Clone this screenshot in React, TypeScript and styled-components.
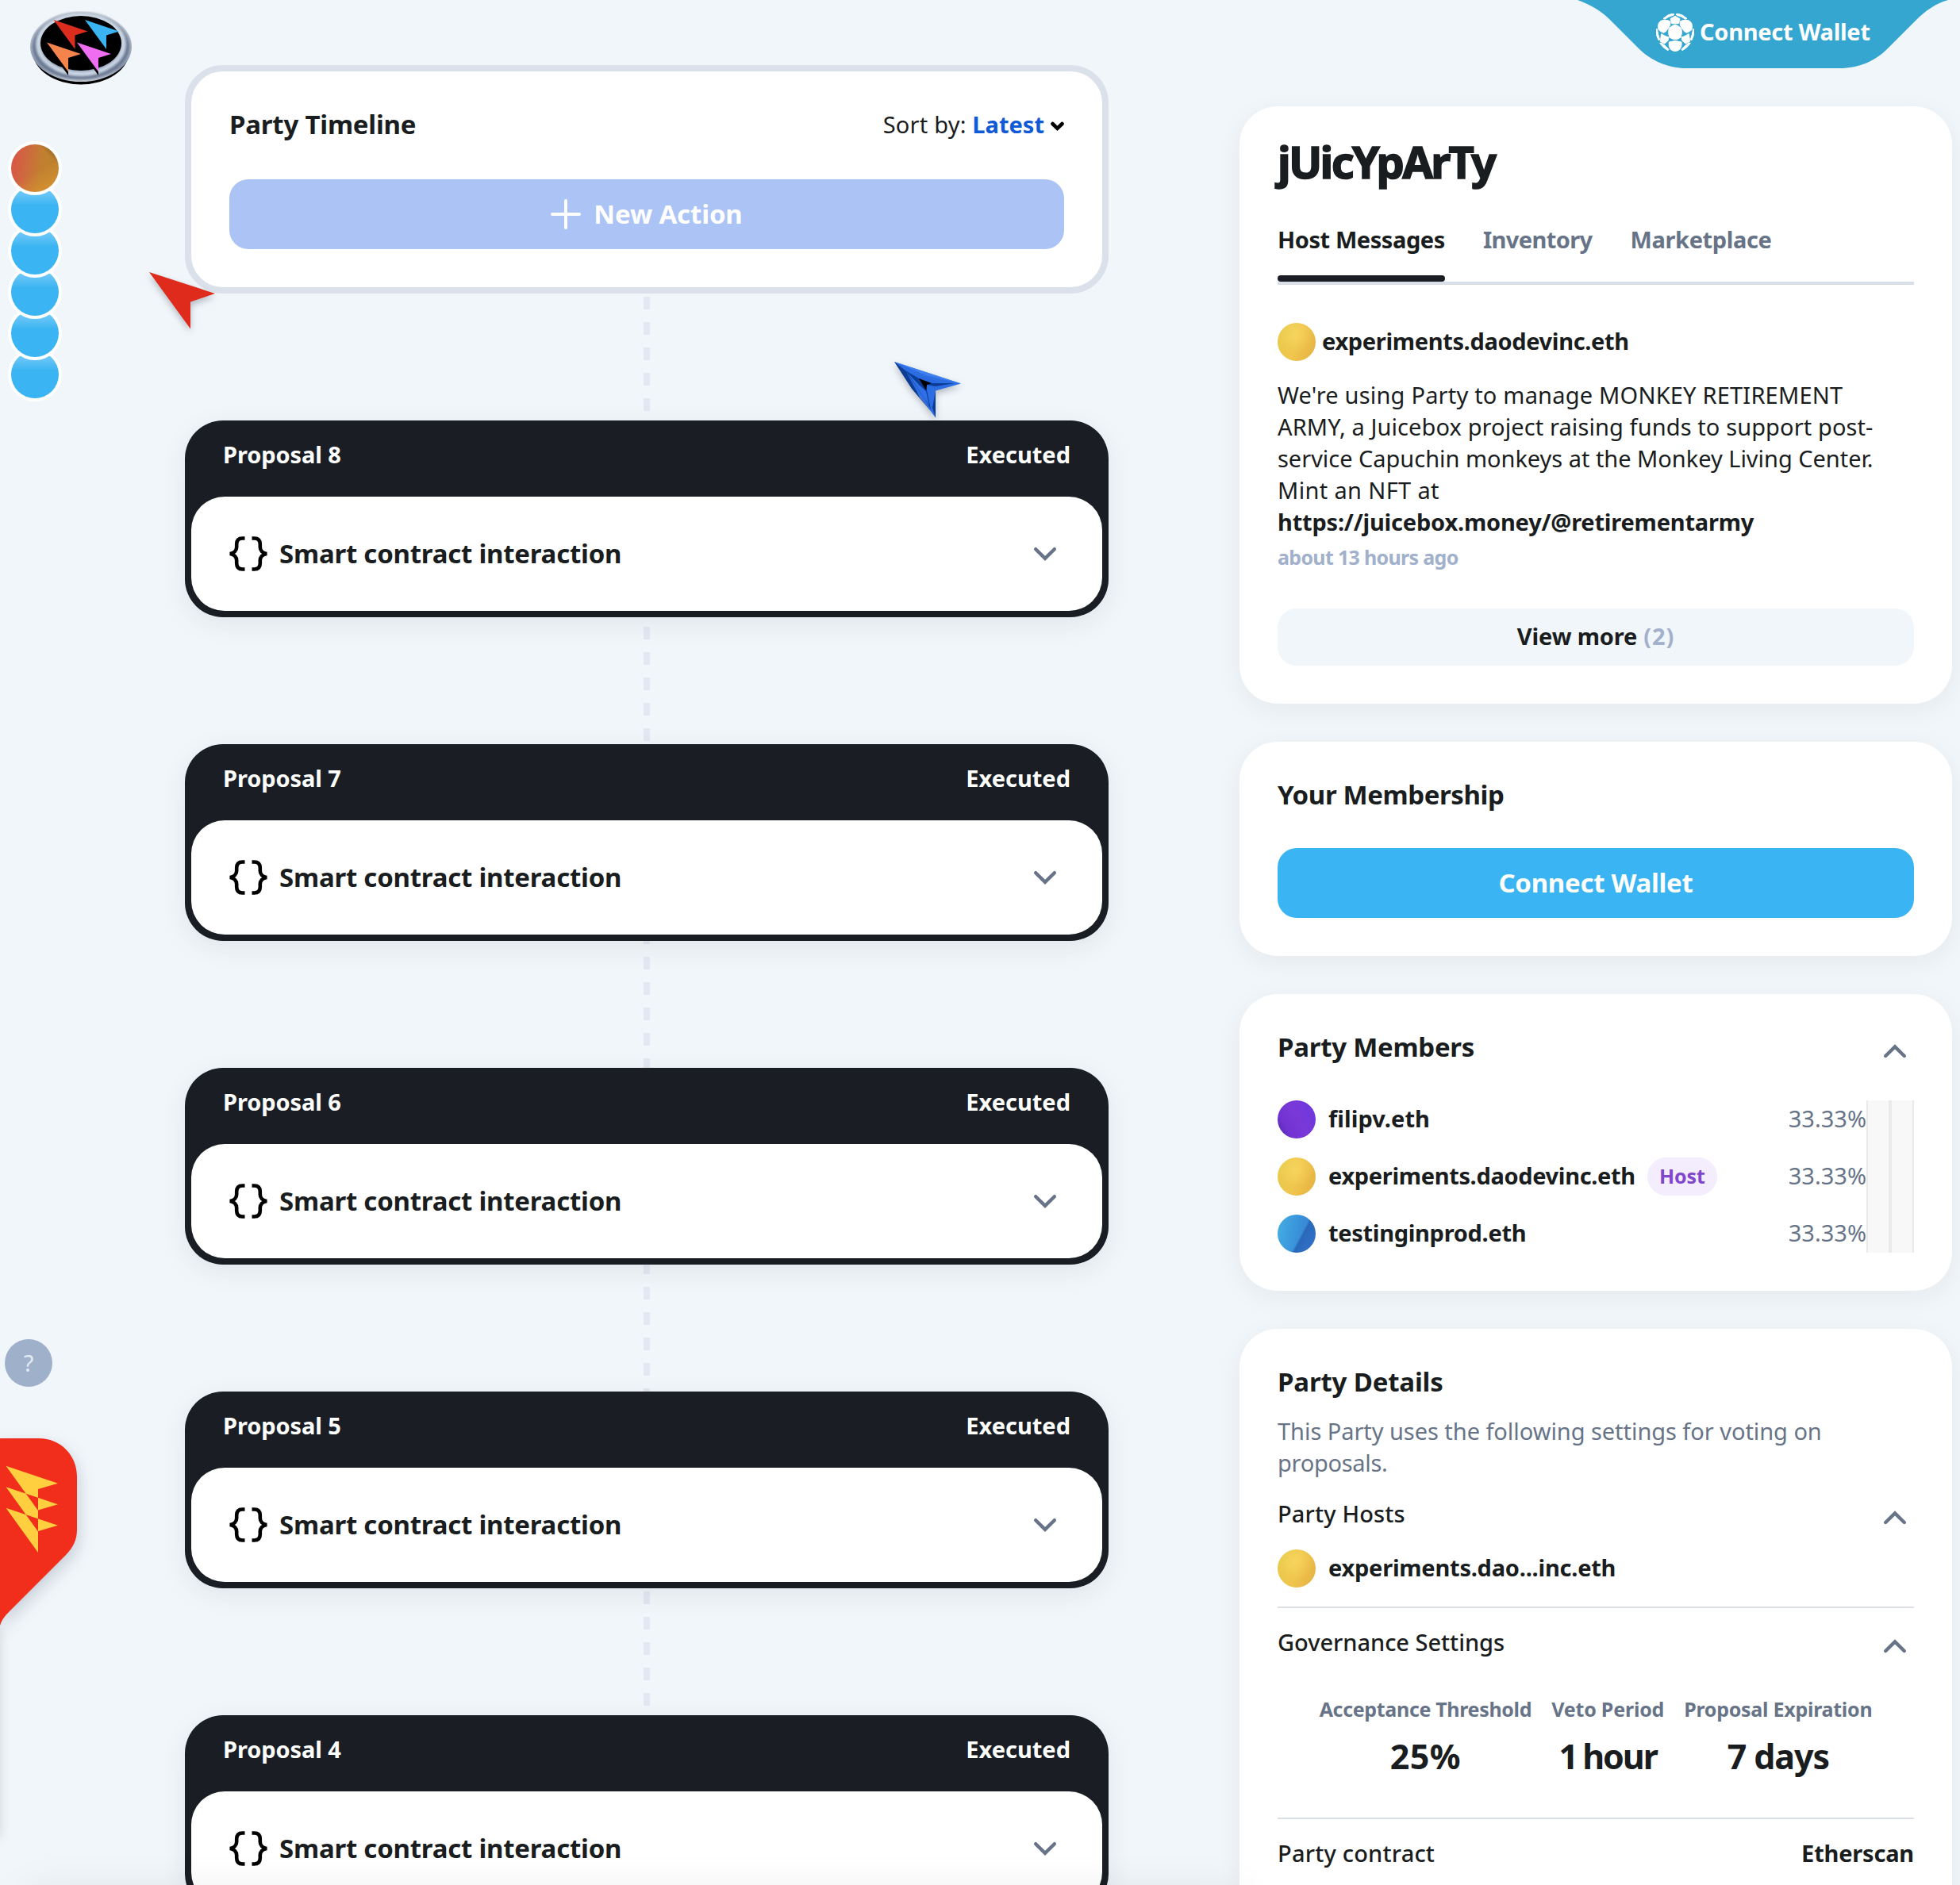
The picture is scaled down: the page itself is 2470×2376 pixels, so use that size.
import React from "react";
import styled, { createGlobalStyle } from "styled-components";

const ink = "#1a1d20";
const slate = "#677487";

const GlobalStyle = createGlobalStyle`
  *, *::before, *::after { box-sizing: border-box; }
  body {
    margin: 0;
    background: #f1f6fa;
    color: ${ink};
    font-family: "Noto Sans", "Open Sans", sans-serif;
    font-size: 29px;
    line-height: 40px;
    overflow: hidden;
  }
  button { font: inherit; border: 0; padding: 0; margin: 0; background: none; color: inherit; }
  h1, h2, h3, p { margin: 0; font-weight: inherit; font-size: inherit; }
  svg { display: block; flex: none; }
`;

/* ---------- page frame ---------- */

const Page = styled.div`
  position: relative;
  display: flex;
  width: 2470px;
  height: 2376px;
  overflow: hidden;
  background: #f1f6fa;
`;

const Rail = styled.nav`
  flex: none;
  width: 233px;
  display: flex;
  flex-direction: column;
  align-items: flex-start;
`;

const Timeline = styled.main`
  flex: none;
  width: 1164px;
  padding-top: 82px;
`;

const Sidebar = styled.aside`
  flex: none;
  width: 898px;
  margin-left: 165px;
  padding-top: 134px;
  display: flex;
  flex-direction: column;
  gap: 48px;
`;

/* ---------- text ---------- */

const Text = styled.span<{ $track?: number; $weight?: number; $color?: string }>`
  white-space: pre;
  letter-spacing: ${(p) => p.$track ?? 0}px;
  font-weight: ${(p) => p.$weight ?? 400};
  color: ${(p) => p.$color ?? "inherit"};
`;

const Heading = styled.h2<{ $track?: number }>`
  font-size: 33px;
  line-height: 40px;
  font-weight: 700;
  white-space: nowrap;
  letter-spacing: ${(p) => p.$track ?? 0}px;
`;

/* ---------- left rail ---------- */

const LogoLink = styled.div`
  margin: 14px 0 0 36px;
  height: 96px;
`;

const PartyStack = styled.div`
  display: flex;
  flex-direction: column;
  margin: 68px 0 0 10px;
  isolation: isolate;
`;

const PartyDot = styled.div<{ $fill: string; $layer: number }>`
  position: relative;
  z-index: ${(p) => p.$layer};
  width: 68px;
  height: 68px;
  border-radius: 50%;
  padding: 4px;
  background: #fff;
  & + & { margin-top: -16px; }
  &::before {
    content: "";
    display: block;
    width: 60px;
    height: 60px;
    border-radius: 50%;
    background: ${(p) => p.$fill};
  }
`;

const HelpButton = styled.button`
  width: 60px;
  height: 60px;
  margin: 1182px 0 0 6px;
  border-radius: 50%;
  background: #9fb0cb;
  color: #e3ebf5;
  line-height: 58px;
  text-align: center;
`;

const BoltTab = styled.div`
  margin-top: 65px;
  height: 240px;
  svg { overflow: visible; filter: drop-shadow(2px 8px 10px rgba(30, 45, 80, 0.2)); }
`;

const DrawerEdge = styled.div`
  width: 4px;
  height: 270px;
  margin: -6px 0 0 -8px;
  box-shadow: 2px 0 14px rgba(0, 0, 0, 0.3);
`;

/* ---------- timeline ---------- */

const ComposeCard = styled.section`
  height: 288px;
  padding: 47px 48px 0;
  border: 8px solid #dae1ea;
  border-radius: 48px;
  background: #fff;
`;

const ComposeHead = styled.header`
  display: flex;
  justify-content: space-between;
  align-items: center;
  margin-bottom: 49px;
`;

const Sort = styled.div`
  display: flex;
  align-items: center;
  white-space: pre;
  svg { margin: 3px 0 0 8px; }
`;

const ActionButton = styled.button<{ $tone: string }>`
  display: flex;
  align-items: center;
  justify-content: center;
  gap: 16px;
  width: 100%;
  height: 88px;
  padding-bottom: 1px;
  border-radius: 24px;
  background: ${(p) => p.$tone};
  color: #fff;
  font-size: 33px;
`;

const Track = styled.div`
  height: 2006px;
  padding-top: 160px;
  display: flex;
  flex-direction: column;
  gap: 160px;
  background: repeating-linear-gradient(#e5e8f2 0 16px, transparent 16px 32px) 578px 4px / 8px 2002px no-repeat;
`;

const ProposalCard = styled.article`
  flex: none;
  height: 248px;
  border-radius: 48px;
  padding: 0 8px 8px;
  background: #1a1d24;
  box-shadow: 0 8px 32px rgba(30, 35, 45, 0.08);
`;

const ProposalHead = styled.header`
  display: flex;
  justify-content: space-between;
  height: 96px;
  padding: 23px 40px 0;
  color: #fff;
`;

const ProposalBody = styled.div`
  display: flex;
  align-items: center;
  height: 144px;
  padding: 0 56px 0 48px;
  border-radius: 42px;
  background: #fff;
  h2 { flex: 1; padding-left: 15px; }
`;

/* ---------- sidebar ---------- */

const Card = styled.section<{ $height: number; $top?: number }>`
  flex: none;
  height: ${(p) => p.$height}px;
  padding: ${(p) => p.$top ?? 47}px 48px 0;
  border-radius: 48px;
  background: #fff;
  box-shadow: 0 8px 32px rgba(30, 35, 45, 0.06);
`;

const PartyName = styled.h1`
  font-size: 56px;
  line-height: 72px;
  font-weight: 700;
  letter-spacing: -2.7px;
  white-space: nowrap;
  -webkit-text-stroke: 1.6px ${ink};
`;

const Tabs = styled.div`
  display: flex;
  gap: 48px;
  height: 77px;
  margin-top: 43px;
  border-bottom: 4px solid #d9dfe8;
`;

const Tab = styled.div<{ $active?: boolean }>`
  display: flex;
  flex-direction: column;
  justify-content: space-between;
  color: ${(p) => (p.$active ? ink : slate)};
  &::after {
    content: "";
    height: 8px;
    border-radius: 4px;
    background: ${(p) => (p.$active ? "#1a1d24" : "transparent")};
  }
`;

const PersonRow = styled.div<{ $gap?: number; $mt?: number }>`
  display: flex;
  align-items: center;
  gap: ${(p) => p.$gap ?? 16}px;
  height: 48px;
  margin-top: ${(p) => p.$mt ?? 0}px;
  > span { position: relative; top: -1px; }
`;

const Avatar = styled.div<{ $fill: string }>`
  flex: none;
  width: 48px;
  height: 48px;
  border-radius: 50%;
  background: ${(p) => p.$fill};
`;

const Message = styled.div`
  display: flex;
  flex-direction: column;
  align-items: flex-start;
  margin-top: 23px;
`;

const TimeAgo = styled.div`
  margin-top: 8px;
  font-size: 25px;
  line-height: 32px;
  font-weight: 700;
  color: #a1b0cb;
  letter-spacing: -0.68px;
`;

const MoreButton = styled.button`
  display: flex;
  align-items: center;
  justify-content: center;
  gap: 8px;
  width: 100%;
  height: 72px;
  margin-top: 49px;
  padding-bottom: 2px;
  border-radius: 24px;
  background: #f1f6fa;
`;

const MembershipAction = styled.div`
  margin-top: 47px;
`;

const SectionHead = styled.div<{ $mt?: number }>`
  display: flex;
  justify-content: space-between;
  align-items: center;
  height: 40px;
  margin-top: ${(p) => p.$mt ?? 0}px;
  svg { margin: 10px 8px 0 0; }
`;

const MemberPanel = styled.div`
  display: flex;
  margin-top: 47px;
`;

const MemberList = styled.div`
  flex: 1;
  display: flex;
  flex-direction: column;
  gap: 24px;
`;

const Share = styled.span`
  margin-left: auto;
  color: ${slate};
`;

const ScrollGutter = styled.div`
  width: 30px;
  background: #f8f8f9;
  border: solid #eaeaeb;
  border-width: 0 2px;
`;

const HostBadge = styled.div`
  width: 88px;
  height: 48px;
  margin-left: -1px;
  border-radius: 24px;
  background: #f3edfd;
  color: #8046cc;
  font-size: 25px;
  line-height: 46px;
  font-weight: 700;
  letter-spacing: -0.1px;
  text-align: center;
`;

const Paragraph = styled.p`
  display: flex;
  flex-direction: column;
  align-items: flex-start;
  margin-top: 22px;
  color: ${slate};
`;

const Divider = styled.hr<{ $mt: number }>`
  height: 2px;
  margin: ${(p) => p.$mt}px 0 23px;
  border: 0;
  background: #dcdfe3;
`;

const Stats = styled.dl`
  display: flex;
  justify-content: center;
  gap: 25px;
  margin: 48px 0 0;
`;

const Stat = styled.div`
  text-align: center;
`;

const StatLabel = styled.dt<{ $track: number }>`
  font-size: 25px;
  line-height: 32px;
  font-weight: 700;
  color: ${slate};
  white-space: nowrap;
  letter-spacing: ${(p) => p.$track}px;
`;

const StatValue = styled.dd<{ $track: number; $word?: number }>`
  margin: 16px 0 0;
  font-size: 43px;
  line-height: 56px;
  font-weight: 700;
  white-space: nowrap;
  letter-spacing: ${(p) => p.$track}px;
  word-spacing: ${(p) => p.$word ?? 0}px;
`;

const ContractRow = styled.div`
  display: flex;
  justify-content: space-between;
`;

/* ---------- overlays ---------- */

const WalletTab = styled.div`
  position: absolute;
  top: 0;
  left: 1986px;
  width: 470px;
  height: 86px;
  > svg { position: absolute; inset: 0; }
`;

const WalletLabel = styled.div`
  position: relative;
  display: flex;
  align-items: center;
  gap: 7px;
  height: 82px;
  padding-left: 101px;
  color: #fff;
  > span { padding-bottom: 2px; }
`;

const Cursor = styled.div<{ $x: number; $y: number }>`
  position: absolute;
  left: ${(p) => p.$x}px;
  top: ${(p) => p.$y}px;
  svg { overflow: visible; filter: drop-shadow(0 4px 4px rgba(20, 30, 50, 0.28)); }
`;

const BottomShade = styled.div`
  position: absolute;
  left: 40px;
  top: 2390px;
  width: 1520px;
  height: 40px;
  box-shadow: 0 0 56px 4px rgba(0, 0, 0, 0.09);
`;

/* ---------- drawings ---------- */

const Chevron = ({ up }: { up?: boolean }) => (
  <svg width="32" height="20" viewBox="0 0 32 20" fill="none" stroke={slate} strokeWidth="4.4" strokeLinecap="round">
    <path d={up ? "M4.2 16 16 4.4 27.8 16" : "M4.2 4.2 16 15.8 27.8 4.2"} />
  </svg>
);

const Braces = () => (
  <svg width="48" height="46" viewBox="0 0 48 46" fill="none" stroke="#000" strokeWidth="4.6">
    <path d="M19.5 3.5H16.5C11.5 3.5 9.2 6.4 9.2 11V14.5C9.2 19 6 22.2 0.8 23C6 23.8 9.2 27 9.2 31.5V35C9.2 39.6 11.5 42.5 16.5 42.5H19.5" />
    <path d="M28.5 3.5H31.5C36.5 3.5 38.8 6.4 38.8 11V14.5C38.8 19 42 22.2 47.2 23C42 23.8 38.8 27 38.8 31.5V35C38.8 39.6 36.5 42.5 31.5 42.5H28.5" />
  </svg>
);

const Plus = () => (
  <svg width="38" height="38" viewBox="0 0 38 38" stroke="#fff" strokeWidth="4" strokeLinecap="round">
    <path d="M19 2V36M2 19H36" />
  </svg>
);

const ballHalf = [
  "M88 21Q66 22 48 40L54 43Q66 33 88 27Z",
  "M30 60Q37 45 53 46Q69 46 75 52Q77 66 66 78Q58 92 49 94Q35 88 30 82Q27 70 30 60Z",
  "M22 80Q18 100 30 122L35 120Q28 100 25 80Z",
  "M41 98L57 107L69 111L66 124L53 135L37 127Z",
  "M35 133Q47 152 66 161L69 157Q60 145 42 133Z",
];

const Ball = () => (
  <svg width="48" height="48" viewBox="21 21 144 144" fill="#fff" stroke="#fff" strokeWidth="3" strokeLinejoin="round">
    <path d="M93 31 111 41 106 59H80L75 41Z" />
    <path d="M93 63Q115 72 117 80Q120 98 114 111Q104 119 93 119Q82 119 72 111Q66 98 69 80Q71 72 93 63Z" />
    <path d="M70 129Q93 120 117 129Q120 146 110 157Q93 170 76 157Q67 146 70 129Z" />
    {ballHalf.map((d) => <path key={d} d={d} />)}
    <g transform="translate(186 0) scale(-1 1)">
      {ballHalf.map((d) => <path key={d} d={d} />)}
    </g>
  </svg>
);

const arrow = (x: number, y: number) => `M${x} ${y}l43 14.5-16 5v17.5Z`;

const Logo = () => (
  <svg width="132" height="96" viewBox="36 14 132 96">
    <defs>
      <linearGradient id="rim" x1="0" y1="0" x2="0" y2="1">
        <stop offset="0" stopColor="#dde2ea" />
        <stop offset="0.45" stopColor="#a9b4c5" />
        <stop offset="0.8" stopColor="#8a98ae" />
        <stop offset="1" stopColor="#c3cbd7" />
      </linearGradient>
      <linearGradient id="groove" x1="0" y1="0" x2="0" y2="1">
        <stop offset="0" stopColor="#aeb7c4" />
        <stop offset="0.5" stopColor="#66758e" />
        <stop offset="1" stopColor="#66758e" />
      </linearGradient>
      <filter id="soft" x="-10%" y="-10%" width="120%" height="120%">
        <feGaussianBlur stdDeviation="1.8" />
      </filter>
    </defs>
    <ellipse cx="102" cy="64" rx="61" ry="42.5" />
    <ellipse cx="102" cy="58.8" rx="64" ry="44.3" fill="url(#rim)" />
    <ellipse cx="102" cy="57.5" rx="59" ry="40.5" fill="none" stroke="url(#groove)" strokeWidth="4" filter="url(#soft)" />
    <ellipse cx="102" cy="56" rx="53.5" ry="37" fill="none" stroke="#ccd8e6" strokeWidth="4.5" filter="url(#soft)" />
    <ellipse cx="102" cy="54.5" rx="51" ry="34.5" />
    <path d={arrow(59, 58) + arrow(97, 58)} />
    <path d={arrow(67.5, 25)} fill="#dc2c1e" />
    <path d={arrow(107, 25)} fill="#3ab4f2" />
    <path d={arrow(59, 53.5)} fill="#f4844c" />
    <path d={arrow(97, 53.5)} fill="#ee6df0" />
  </svg>
);

const Bolt = () => (
  <svg width="97" height="236" viewBox="0 0 97 236">
    <path
      fill="#f12e1b"
      d="M0 0H49C76 0 97 21 97 48V115C97 128 92 138 83 147L12 218C6 224 2 229 0 236Z"
    />
    <path
      fill="#ffcf40"
      fillRule="evenodd"
      d="M7.5 34.8 73 56.7 48 64V91ZM7.5 61.3 73 83.2 48 90.5V117.5ZM7.5 87.8 73 109.7 48 117V144Z"
    />
  </svg>
);

/* ---------- data ---------- */

const gold =
  "radial-gradient(circle at 45% 30%, rgba(255,226,110,.5), transparent 55%), linear-gradient(110deg, #e9c94b 15%, #f0c64d 50%, #e6b243 95%)";
const violet = "linear-gradient(60deg, #5128ad 4%, #7233d2 26%, #7a38d8 55%, #6a38e0)";
const ocean =
  "linear-gradient(118deg, transparent 58%, rgba(39,98,180,.85) 62%, rgba(45,105,190,.8) 80%, rgba(50,115,205,.8)), linear-gradient(100deg, #43afe2, #3a93da 50%, #3576cf)";
const ember =
  "linear-gradient(150deg, transparent 55%, rgba(221,150,50,.75) 90%), linear-gradient(45deg, transparent 78%, rgba(140,95,28,.75) 88%), linear-gradient(100deg, #d65a46 12%, #cc6d3c 38%, #c17f30 60%, #b9832c)";
const sky = "linear-gradient(#7fcdf8, #5fc2f6 22%, #3ab4f2 42%)";

const dots = [ember, sky, sky, sky, sky, sky];

const proposals = [8, 7, 6, 5, 4];

const members = [
  { name: "filipv.eth", fill: violet, track: 0.07 },
  { name: "experiments.daodevinc.eth", fill: gold, track: -0.34, host: true },
  { name: "testinginprod.eth", fill: ocean, track: -0.31 },
];

const message: [string, number][] = [
  ["We're using Party to manage MONKEY RETIREMENT", 0.2],
  ["ARMY, a Juicebox project raising funds to support post-", 0.1],
  ["service Capuchin monkeys at the Monkey Living Center.", -0.03],
  ["Mint an NFT at", 0.35],
];

export default function App() {
  return (
    <>
      <GlobalStyle />
      <Page>
        <Rail>
          <LogoLink><Logo /></LogoLink>
          <PartyStack>
            {dots.map((fill, i) => (
              <PartyDot key={i} $fill={fill} $layer={dots.length - i} />
            ))}
          </PartyStack>
          <HelpButton>?</HelpButton>
          <BoltTab><Bolt /></BoltTab>
          <DrawerEdge />
        </Rail>

        <Timeline>
          <ComposeCard>
            <ComposeHead>
              <Heading $track={-0.22}>Party Timeline</Heading>
              <Sort>
                <Text $track={0.2}>{"Sort by: "}</Text>
                <Text $weight={700} $color="#115ad6">Latest</Text>
                <svg width="17" height="12" viewBox="0 0 17 12" fill="none" stroke="#000" strokeWidth="4.6" strokeLinecap="round">
                  <path d="M2.5 3 8.5 8.8 14.5 3" />
                </svg>
              </Sort>
            </ComposeHead>
            <ActionButton $tone="#abc4f5">
              <Plus />
              <Text $weight={700} $track={-0.15}>New Action</Text>
            </ActionButton>
          </ComposeCard>
          <Track>
            {proposals.map((n) => (
              <ProposalCard key={n}>
                <ProposalHead>
                  <Text $weight={700} $track={-0.1}>Proposal {n}</Text>
                  <Text $weight={700}>Executed</Text>
                </ProposalHead>
                <ProposalBody>
                  <Braces />
                  <Heading $track={-0.24}>Smart contract interaction</Heading>
                  <Chevron />
                </ProposalBody>
              </ProposalCard>
            ))}
          </Track>
        </Timeline>

        <Sidebar>
          <Card $height={753} $top={33}>
            <PartyName>jUicYpArTy</PartyName>
            <Tabs>
              <Tab $active><Text $weight={700} $track={-0.42}>Host Messages</Text></Tab>
              <Tab><Text $weight={700} $track={-0.6}>Inventory</Text></Tab>
              <Tab><Text $weight={700} $track={-0.4}>Marketplace</Text></Tab>
            </Tabs>
            <PersonRow $gap={8} $mt={48}>
              <Avatar $fill={gold} />
              <Text $weight={700} $track={-0.34}>experiments.daodevinc.eth</Text>
            </PersonRow>
            <Message>
              {message.map(([line, track]) => (
                <Text key={line} $track={track}>{line}</Text>
              ))}
              <Text $weight={700} $track={-0.2}>https://juicebox.money/@retirementarmy</Text>
            </Message>
            <TimeAgo>about 13 hours ago</TimeAgo>
            <MoreButton>
              <Text $weight={700} $track={-0.15}>View more</Text>
              <Text $weight={700} $track={0.9} $color="#a1b0cb">(2)</Text>
            </MoreButton>
          </Card>

          <Card $height={270}>
            <Heading $track={-0.4}>Your Membership</Heading>
            <MembershipAction>
              <ActionButton $tone="#3ab4f2">
                <Text $weight={700} $track={-0.28}>Connect Wallet</Text>
              </ActionButton>
            </MembershipAction>
          </Card>

          <Card $height={374}>
            <SectionHead>
              <Heading $track={-0.27}>Party Members</Heading>
              <Chevron up />
            </SectionHead>
            <MemberPanel>
              <MemberList>
                {members.map((m) => (
                  <PersonRow key={m.name}>
                    <Avatar $fill={m.fill} />
                    <Text $weight={700} $track={m.track}>{m.name}</Text>
                    {m.host && <HostBadge>Host</HostBadge>}
                    <Share>33.33%</Share>
                  </PersonRow>
                ))}
              </MemberList>
              <ScrollGutter />
              <ScrollGutter />
            </MemberPanel>
          </Card>

          <Card $height={820}>
            <Heading $track={-0.18}>Party Details</Heading>
            <Paragraph>
              <Text $track={-0.05}>This Party uses the following settings for voting on</Text>
              <Text $track={-0.3}>proposals.</Text>
            </Paragraph>
            <SectionHead $mt={24}>
              <Text $weight={500} $track={0.15}>Party Hosts</Text>
              <Chevron up />
            </SectionHead>
            <PersonRow $mt={25}>
              <Avatar $fill={gold} />
              <Text $weight={700} $track={-0.24}>experiments.dao...inc.eth</Text>
            </PersonRow>
            <Divider $mt={24} />
            <SectionHead>
              <Text $weight={500} $track={-0.03}>Governance Settings</Text>
              <Chevron up />
            </SectionHead>
            <Stats>
              <Stat>
                <StatLabel $track={-0.33}>Acceptance Threshold</StatLabel>
                <StatValue $track={0.4}>25%</StatValue>
              </Stat>
              <Stat>
                <StatLabel $track={-0.2}>Veto Period</StatLabel>
                <StatValue $track={-2.1} $word={-2}>1 hour</StatValue>
              </Stat>
              <Stat>
                <StatLabel $track={-0.27}>Proposal Expiration</StatLabel>
                <StatValue $track={-1.1}>7 days</StatValue>
              </Stat>
            </Stats>
            <Divider $mt={49} />
            <ContractRow>
              <Text $weight={500} $track={0.2}>Party contract</Text>
              <Text $weight={700} $track={-0.2}>Etherscan</Text>
            </ContractRow>
          </Card>
        </Sidebar>

        <WalletTab>
          <svg width="470" height="86" viewBox="1986 0 470 86">
            <path
              fill="#35a6d0"
              d="M1988 0C2002 5 2016 12 2028 24L2065 61C2080 76 2102 86 2125 86H2318C2344 86 2364 76 2379 61L2414 26C2427 13 2440 4 2455 0Z"
            />
          </svg>
          <WalletLabel>
            <Ball />
            <Text $weight={700} $track={-0.3}>Connect Wallet</Text>
          </WalletLabel>
        </WalletTab>

        <Cursor $x={188} $y={343}>
          <svg width="84" height="72" viewBox="0 0 84 72">
            <path fill="#de2b1c" d="M0 0 83 27 52 37.5V71.5Z" />
          </svg>
        </Cursor>
        <Cursor $x={1127} $y={456}>
          <svg width="84" height="72" viewBox="0 0 84 72">
            <path fill="#2d6de4" d="M0 0 84 27.5 52 36.5V70.5Z" />
            <path fill="#3f80ee" d="M0 0 84 27.5 40 17Z" />
            <path fill="#0d3c93" d="M0 0 14 11 32 44 46 62 44 60 22 34Z" />
            <path fill="#0b3d94" d="M14 11 31 21 45 27 76 27 52 31 41 29 41 36 46 60 38 46Z" />
            <path fill="#2f6fe8" d="M17 14 31 29 40 37 44 55 36 43Z" />
            <path fill="#2a68de" d="M17 13 34 19 58 25 47 27Z" />
            <path fill="#0b3d94" d="M52 36.5 52 70.5 48 58Z" />
            <path d="M31 21 47 27 41 29 40 36Z" />
          </svg>
        </Cursor>
        <BottomShade />
      </Page>
    </>
  );
}
